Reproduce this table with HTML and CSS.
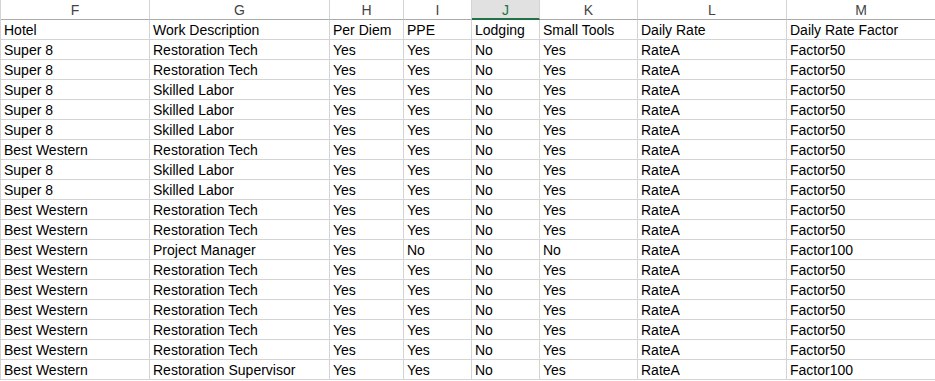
FILE: index.html
```html
<!DOCTYPE html>
<html>
<head>
<meta charset="utf-8">
<link rel="stylesheet" href="styles.css">
</head>
<body>
<div class="sheet">
  <div class="hd">F</div><div class="hd">G</div><div class="hd">H</div><div class="hd">I</div><div class="hd sel">J</div><div class="hd">K</div><div class="hd">L</div><div class="hd">M</div>

  <div class="c">Hotel</div><div class="c">Work Description</div><div class="c">Per Diem</div><div class="c">PPE</div><div class="c">Lodging</div><div class="c">Small Tools</div><div class="c">Daily Rate</div><div class="c">Daily Rate Factor</div>

  <div class="c">Super 8</div><div class="c">Restoration Tech</div><div class="c">Yes</div><div class="c">Yes</div><div class="c">No</div><div class="c">Yes</div><div class="c">RateA</div><div class="c">Factor50</div>
  <div class="c">Super 8</div><div class="c">Restoration Tech</div><div class="c">Yes</div><div class="c">Yes</div><div class="c">No</div><div class="c">Yes</div><div class="c">RateA</div><div class="c">Factor50</div>
  <div class="c">Super 8</div><div class="c">Skilled Labor</div><div class="c">Yes</div><div class="c">Yes</div><div class="c">No</div><div class="c">Yes</div><div class="c">RateA</div><div class="c">Factor50</div>
  <div class="c">Super 8</div><div class="c">Skilled Labor</div><div class="c">Yes</div><div class="c">Yes</div><div class="c">No</div><div class="c">Yes</div><div class="c">RateA</div><div class="c">Factor50</div>
  <div class="c">Super 8</div><div class="c">Skilled Labor</div><div class="c">Yes</div><div class="c">Yes</div><div class="c">No</div><div class="c">Yes</div><div class="c">RateA</div><div class="c">Factor50</div>
  <div class="c">Best Western</div><div class="c">Restoration Tech</div><div class="c">Yes</div><div class="c">Yes</div><div class="c">No</div><div class="c">Yes</div><div class="c">RateA</div><div class="c">Factor50</div>
  <div class="c">Super 8</div><div class="c">Skilled Labor</div><div class="c">Yes</div><div class="c">Yes</div><div class="c">No</div><div class="c">Yes</div><div class="c">RateA</div><div class="c">Factor50</div>
  <div class="c">Super 8</div><div class="c">Skilled Labor</div><div class="c">Yes</div><div class="c">Yes</div><div class="c">No</div><div class="c">Yes</div><div class="c">RateA</div><div class="c">Factor50</div>
  <div class="c">Best Western</div><div class="c">Restoration Tech</div><div class="c">Yes</div><div class="c">Yes</div><div class="c">No</div><div class="c">Yes</div><div class="c">RateA</div><div class="c">Factor50</div>
  <div class="c">Best Western</div><div class="c">Restoration Tech</div><div class="c">Yes</div><div class="c">Yes</div><div class="c">No</div><div class="c">Yes</div><div class="c">RateA</div><div class="c">Factor50</div>
  <div class="c">Best Western</div><div class="c">Project Manager</div><div class="c">Yes</div><div class="c">No</div><div class="c">No</div><div class="c">No</div><div class="c">RateA</div><div class="c">Factor100</div>
  <div class="c">Best Western</div><div class="c">Restoration Tech</div><div class="c">Yes</div><div class="c">Yes</div><div class="c">No</div><div class="c">Yes</div><div class="c">RateA</div><div class="c">Factor50</div>
  <div class="c">Best Western</div><div class="c">Restoration Tech</div><div class="c">Yes</div><div class="c">Yes</div><div class="c">No</div><div class="c">Yes</div><div class="c">RateA</div><div class="c">Factor50</div>
  <div class="c">Best Western</div><div class="c">Restoration Tech</div><div class="c">Yes</div><div class="c">Yes</div><div class="c">No</div><div class="c">Yes</div><div class="c">RateA</div><div class="c">Factor50</div>
  <div class="c">Best Western</div><div class="c">Restoration Tech</div><div class="c">Yes</div><div class="c">Yes</div><div class="c">No</div><div class="c">Yes</div><div class="c">RateA</div><div class="c">Factor50</div>
  <div class="c">Best Western</div><div class="c">Restoration Tech</div><div class="c">Yes</div><div class="c">Yes</div><div class="c">No</div><div class="c">Yes</div><div class="c">RateA</div><div class="c">Factor50</div>
  <div class="c">Best Western</div><div class="c">Restoration Supervisor</div><div class="c">Yes</div><div class="c">Yes</div><div class="c">No</div><div class="c">Yes</div><div class="c">RateA</div><div class="c">Factor100</div>
</div>
</body>
</html>
```
FILE: styles.css
```css
html, body {
  margin: 0;
  padding: 0;
  background: #ffffff;
  overflow: hidden;
}
.sheet {
  display: grid;
  grid-template-columns: 149px 180px 74px 68px 68px 98px 149px 149px;
  grid-auto-rows: 20px;
  border-left: 1px solid #d4d4d4;
  width: max-content;
  font-family: "Liberation Sans", Arial, sans-serif;
  font-size: 14px;
  color: #000000;
}
.hd {
  box-sizing: border-box;
  height: 20px;
  border-right: 1px solid #d4d4d4;
  border-bottom: 1px solid #ababab;
  text-align: center;
  padding-top: 2px;
  line-height: 17px;
  color: #444444;
  background: #ffffff;
}
.hd.sel {
  background: #e1e1e1;
  color: #217346;
  border-bottom: 2px solid #217346;
  line-height: 16px;
}
.c {
  box-sizing: border-box;
  height: 20px;
  border-right: 1px solid #d4d4d4;
  border-bottom: 1px solid #d4d4d4;
  padding: 2px 0 0 3px;
  line-height: 17px;
  white-space: nowrap;
  overflow: hidden;
}
```
